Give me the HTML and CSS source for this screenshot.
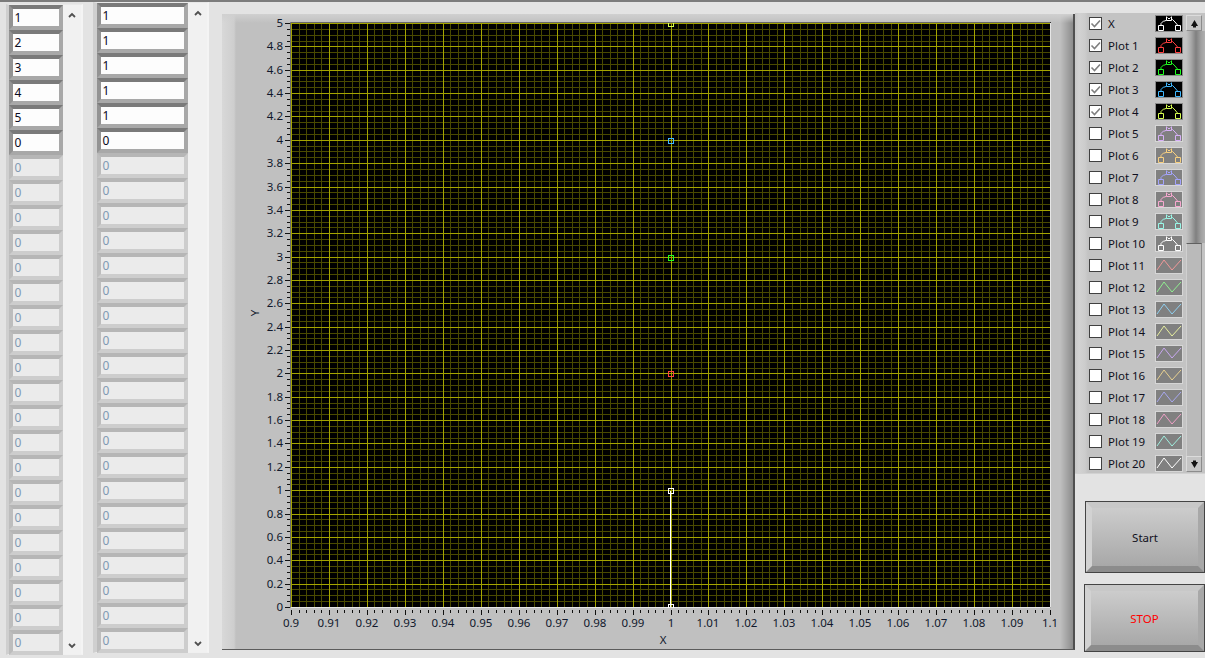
FILE: index.html
```html
<!DOCTYPE html>
<html lang="en">
<head>
<meta charset="utf-8">
<title>XY Graph</title>
<link rel="stylesheet" href="styles.css">
</head>
<body>
<svg class="defs" width="0" height="0" aria-hidden="true">
  <symbol id="bump" viewBox="0 0 28 17">
    <path d="M6 10V8.5L8.5 6H10L12 4.5M16 4.5H17.5L20 7L22.5 10" fill="none" stroke="currentColor"/>
    <path d="M11.5 1.5V5.5H16.5V1.5M12.5 2.5L14 4L15.5 2.5M3.5 10.5H8.5V15.5H3.5ZM20.5 10.5H25.5V15.5H20.5Z" fill="none" stroke="currentColor"/>
  </symbol>
  <symbol id="zig" viewBox="0 0 28 17">
    <path d="M2 13L9 3L17 13L26 3" fill="none" stroke="currentColor"/>
  </symbol>
  <symbol id="tick" viewBox="0 0 11 11">
    <path d="M1.5 5.5L4.5 8.5L10 2.5" fill="none" stroke="#808080" stroke-width="1.6"/>
  </symbol>
</svg>
<main class="app">
  <section class="list list-a">
    <div class="cells">
      <div class="cell">1</div><div class="cell">2</div><div class="cell">3</div><div class="cell">4</div><div class="cell">5</div><div class="cell">0</div>
      <div class="cell off">0</div><div class="cell off">0</div><div class="cell off">0</div><div class="cell off">0</div><div class="cell off">0</div>
      <div class="cell off">0</div><div class="cell off">0</div><div class="cell off">0</div><div class="cell off">0</div><div class="cell off">0</div>
      <div class="cell off">0</div><div class="cell off">0</div><div class="cell off">0</div><div class="cell off">0</div><div class="cell off">0</div>
      <div class="cell off">0</div><div class="cell off">0</div><div class="cell off">0</div><div class="cell off">0</div><div class="cell off">0</div>
    </div>
    <div class="vscroll">
      <svg class="chev" viewBox="0 0 8 6"><path d="M1 5L4 2L7 5" fill="none" stroke="#505050" stroke-width="1.8"/></svg>
      <svg class="chev" viewBox="0 0 8 6"><path d="M1 1L4 4L7 1" fill="none" stroke="#505050" stroke-width="1.8"/></svg>
    </div>
  </section>
  <section class="list list-b">
    <div class="cells">
      <div class="cell">1</div><div class="cell">1</div><div class="cell">1</div><div class="cell">1</div><div class="cell">1</div><div class="cell">0</div>
      <div class="cell off">0</div><div class="cell off">0</div><div class="cell off">0</div><div class="cell off">0</div><div class="cell off">0</div>
      <div class="cell off">0</div><div class="cell off">0</div><div class="cell off">0</div><div class="cell off">0</div><div class="cell off">0</div>
      <div class="cell off">0</div><div class="cell off">0</div><div class="cell off">0</div><div class="cell off">0</div><div class="cell off">0</div>
      <div class="cell off">0</div><div class="cell off">0</div><div class="cell off">0</div><div class="cell off">0</div><div class="cell off">0</div>
    </div>
    <div class="vscroll">
      <svg class="chev" viewBox="0 0 8 6"><path d="M1 5L4 2L7 5" fill="none" stroke="#505050" stroke-width="1.8"/></svg>
      <svg class="chev" viewBox="0 0 8 6"><path d="M1 1L4 4L7 1" fill="none" stroke="#505050" stroke-width="1.8"/></svg>
    </div>
  </section>
  <section class="graph">
    <svg id="chart" class="chart" width="851" height="635" viewBox="222 14 851 635"></svg>
  </section>
  <aside class="side">
    <div class="legend">
      <div class="rows">
        <div class="row"><span class="check"><svg class="mark"><use href="#tick"/></svg></span><span class="name">X</span><svg class="ico dark c0"><use href="#bump"/></svg></div>
        <div class="row"><span class="check"><svg class="mark"><use href="#tick"/></svg></span><span class="name">Plot 1</span><svg class="ico dark c1"><use href="#bump"/></svg></div>
        <div class="row"><span class="check"><svg class="mark"><use href="#tick"/></svg></span><span class="name">Plot 2</span><svg class="ico dark c2"><use href="#bump"/></svg></div>
        <div class="row"><span class="check"><svg class="mark"><use href="#tick"/></svg></span><span class="name">Plot 3</span><svg class="ico dark c3"><use href="#bump"/></svg></div>
        <div class="row"><span class="check"><svg class="mark"><use href="#tick"/></svg></span><span class="name">Plot 4</span><svg class="ico dark c4"><use href="#bump"/></svg></div>
        <div class="row"><span class="check"></span><span class="name">Plot 5</span><svg class="ico c5"><use href="#bump"/></svg></div>
        <div class="row"><span class="check"></span><span class="name">Plot 6</span><svg class="ico c6"><use href="#bump"/></svg></div>
        <div class="row"><span class="check"></span><span class="name">Plot 7</span><svg class="ico c7"><use href="#bump"/></svg></div>
        <div class="row"><span class="check"></span><span class="name">Plot 8</span><svg class="ico c8"><use href="#bump"/></svg></div>
        <div class="row"><span class="check"></span><span class="name">Plot 9</span><svg class="ico c9"><use href="#bump"/></svg></div>
        <div class="row"><span class="check"></span><span class="name">Plot 10</span><svg class="ico c0"><use href="#bump"/></svg></div>
        <div class="row"><span class="check"></span><span class="name">Plot 11</span><svg class="ico c11"><use href="#zig"/></svg></div>
        <div class="row"><span class="check"></span><span class="name">Plot 12</span><svg class="ico c12"><use href="#zig"/></svg></div>
        <div class="row"><span class="check"></span><span class="name">Plot 13</span><svg class="ico c13"><use href="#zig"/></svg></div>
        <div class="row"><span class="check"></span><span class="name">Plot 14</span><svg class="ico c14"><use href="#zig"/></svg></div>
        <div class="row"><span class="check"></span><span class="name">Plot 15</span><svg class="ico c15"><use href="#zig"/></svg></div>
        <div class="row"><span class="check"></span><span class="name">Plot 16</span><svg class="ico c16"><use href="#zig"/></svg></div>
        <div class="row"><span class="check"></span><span class="name">Plot 17</span><svg class="ico c17"><use href="#zig"/></svg></div>
        <div class="row"><span class="check"></span><span class="name">Plot 18</span><svg class="ico c18"><use href="#zig"/></svg></div>
        <div class="row"><span class="check"></span><span class="name">Plot 19</span><svg class="ico c19"><use href="#zig"/></svg></div>
        <div class="row"><span class="check"></span><span class="name">Plot 20</span><svg class="ico c0"><use href="#zig"/></svg></div>
      </div>
      <div class="bar">
        <div class="arrow"><svg class="tri" viewBox="0 0 9 9"><path d="M4.5 1L8 7H1Z" fill="#111"/><path d="M3 7H6V8.5H3Z" fill="#111"/></svg></div>
        <div class="track"></div>
        <div class="thumb"></div>
        <div class="arrow"><svg class="tri" viewBox="0 0 9 9"><path d="M4.5 8L8 2H1Z" fill="#111"/><path d="M3 2H6V0.5H3Z" fill="#111"/></svg></div>
      </div>
    </div>
    <button class="btn btn-start" type="button"><span class="face">Start</span></button>
    <button class="btn btn-stop" type="button"><span class="face">STOP</span></button>
  </aside>
</main>
<script src="script.js"></script>
</body>
</html>
```
FILE: styles.css
```css
* { box-sizing: border-box; }
html, body { margin: 0; padding: 0; }
body {
  width: 1205px;
  height: 658px;
  overflow: hidden;
  background: #e3e3e3;
  font-family: "Noto Sans", "Liberation Sans", sans-serif;
  font-size: 11.5px;
  color: #101020;
}
.defs { display: block; height: 0; }
.app {
  display: flex;
  align-items: flex-start;
  height: 658px;
  border-top: 2px solid #7c7c7c;
}

/* numeric arrays */
.list {
  display: flex;
  background: #dcdcdc;
  border-style: solid;
  border-color: #e9e9e9 #f4f4f4 #f0f0f0 #cfcfcf;
}
.list-a { width: 77px; height: 651px; margin: 2px 0 0 6px; border-width: 1px 2px 1px 3px; }
.list-a .cell { width: 54px; }
.list-a .vscroll { width: 18px; }
.list-b { width: 116px; height: 651px; margin: 0 0 0 10px; border-width: 1px 2px 1px 4px; }
.list-b .cell { width: 91px; }
.list-b .vscroll { width: 19px; }
.cells { display: flex; flex-direction: column; }
.cell {
  height: 25px;
  flex: none;
  padding-left: 1.5px;
  line-height: 17px;
  font-size: 12px;
  background: #fdfdfd;
  color: #0a0a20;
  border: 4px solid;
  border-color: #7a7a7a #a8a8a8 #a8a8a8 #939393;
}
.cell.off {
  background: #ebebeb;
  color: #8199b2;
  border-color: #b6b6b6 #cdcdcd #cdcdcd #bdbdbd;
}
.vscroll {
  display: flex;
  flex-direction: column;
  justify-content: space-between;
  align-items: center;
  background: #f1f1f1;
  padding: 7px 0 5px;
}
.chev { width: 8px; height: 6px; display: block; }

/* graph */
.graph {
  width: 853px;
  height: 636px;
  margin: 12px 0 0 13px;
  border-right: 2px solid #505050;
  border-bottom: 1px solid #5c5c5c;
  background:
    linear-gradient(180deg, #d0d0d0 0, rgba(192, 192, 192, 0) 9px),
    linear-gradient(90deg, #d8d8d8 0, #cecece 12px, #c0c0c0 14px, #c0c0c0 838px, #8c8c8c 851px);
}
.chart { display: block; }
.axis-label { font-family: "Noto Sans", "Liberation Sans", sans-serif; font-size: 11.5px; fill: #10182c; }
.axis-title { font-family: "Noto Sans", "Liberation Sans", sans-serif; font-size: 11.5px; fill: #10182c; }

/* side column */
.side {
  width: 130px;
  margin-top: 11px;
  display: flex;
  flex-direction: column;
  align-items: flex-start;
}
.legend {
  width: 130px;
  height: 461px;
  display: flex;
  overflow: hidden;
  border-bottom: 1px solid #d2d2d2;
  background: linear-gradient(90deg, #c8c8c8 0, #d2d2d2 4px, #cccccc 10px, #c3c3c3 13px);
}
.rows { width: 108px; flex: none; margin-top: -1px; }
.row {
  height: 22px;
  display: flex;
  align-items: center;
  padding-left: 14px;
}
.check {
  width: 13px;
  height: 13px;
  flex: none;
  background: #fff;
  border: 1px solid #404040;
}
.mark { display: block; width: 11px; height: 11px; }
.name { margin-left: 6px; white-space: nowrap; }
.ico {
  margin-left: auto;
  width: 28px;
  height: 17px;
  flex: none;
  display: block;
  background: #808080;
  outline: 1px solid #d6d6d6;
  outline-offset: -1px;
}
.ico.dark { background: #000; outline-color: #8a8a8a; }
.c0 { color: #fff; }
.c1 { color: #ff4040; }
.c2 { color: #20ff20; }
.c3 { color: #40b8ff; }
.c4 { color: #d8ff50; }
.c5 { color: #d8b0f8; }
.c6 { color: #f8d080; }
.c7 { color: #a4a4ff; }
.c8 { color: #f8a8d0; }
.c9 { color: #98f8e8; }
.c11 { color: #f09898; }
.c12 { color: #90f090; }
.c13 { color: #90d0f0; }
.c14 { color: #e8f0a0; }
.c15 { color: #c8a8f0; }
.c16 { color: #e8d090; }
.c17 { color: #a8a8f0; }
.c18 { color: #f0a0c8; }
.c19 { color: #a0f0e0; }
.bar {
  width: 19px;
  margin: 2px 0 0 3px;
  height: 457px;
  display: flex;
  flex-direction: column;
}
.arrow {
  width: 16px;
  height: 16px;
  flex: none;
  display: flex;
  align-items: center;
  justify-content: center;
  background: #c4c4c4;
  border: 1px solid;
  border-color: #dcdcdc #8c8c8c #8c8c8c #dcdcdc;
}
.tri { width: 9px; height: 9px; display: block; }
.track {
  height: 212px;
  flex: none;
  background: linear-gradient(90deg, #c4c4c4 0, #a8a8a8 5px, #808080 10px, #a0a0a0 15px, #b0b0b0 19px);
}
.thumb {
  width: 16px;
  height: 213px;
  flex: none;
  background: #bababa;
  border-top: 1px solid #606060;
  border-left: 1px solid #d0d0d0;
  border-right: 1px solid #8c8c8c;
}

/* buttons */
.btn {
  display: block;
  padding: 0;
  border: 1px solid #444;
  background: #bbb;
  font: inherit;
}
.btn-start { width: 120px; height: 72px; margin: 27px 0 0 10px; color: #101020; }
.btn-stop { width: 121px; height: 68px; margin: 11px 0 0 9px; color: #ff0000; }
.face {
  display: flex;
  align-items: center;
  justify-content: center;
  width: 100%;
  height: 100%;
  border: 6px solid;
  border-color: #c8c8c8 #a8a8a8 #8c8c8c #d2d2d2;
  background: linear-gradient(180deg, #cccccc, #a8a8a8);
}
```
FILE: script.js
```js
(function () {
  var NS = "http://www.w3.org/2000/svg";
  var svg = document.getElementById("chart");
  var L = 291, R = 1050, T = 23, B = 607;
  var XW = R - L, YH = B - T;

  function el(name, attrs, parent, text) {
    var n = document.createElementNS(NS, name);
    for (var k in attrs) n.setAttribute(k, attrs[k]);
    if (text !== undefined) n.textContent = text;
    (parent || svg).appendChild(n);
    return n;
  }
  function xAt(i) { return Math.round(L + XW * i / 100); }
  function yAt(i) { return Math.round(T + YH * i / 100); }

  el("rect", { x: L, y: T - 1, width: XW + 1, height: YH + 2, fill: "#000" });

  var minor = "", major = "", ticks = "", i;
  for (i = 0; i <= 100; i++) {
    var x = xAt(i), isMajX = i % 5 === 0;
    var y = yAt(i), isMajY = i % 4 === 0;
    var vx = "M" + (x + 0.5) + " " + T + "V" + B;
    var hy = "M" + L + " " + (y + 0.5) + "H" + R;
    if (isMajX) major += vx; else minor += vx;
    if (isMajY) major += hy; else minor += hy;
    ticks += "M" + (x + 0.5) + " 610V" + (isMajX ? 615 : 613);
    ticks += "M" + (isMajY ? 285 : 287) + " " + (y + 0.5) + "H290";
  }
  el("path", { d: minor, stroke: "#4a4a00", fill: "none" });
  el("path", { d: major, stroke: "#a4a400", fill: "none" });
  el("path", { d: ticks, stroke: "#101010", fill: "none" });
  el("path", { d: "M" + (L - 0.5) + " " + (T - 0.5) + "H" + (R + 0.5), stroke: "#6a6a6a", fill: "none" });
  el("path", { d: "M" + (L - 0.5) + " " + (T - 0.5) + "V" + (B + 0.5), stroke: "#6a6a6a", fill: "none" });
  el("path", { d: "M" + (R + 0.5) + " " + T + "V" + (B + 0.5) + "H" + L, stroke: "#e6e6e6", fill: "none" });

  for (i = 0; i <= 20; i++) {
    var xv = (90 + i) / 100;
    el("text", { "class": "axis-label", x: xAt(i * 5), y: 627, "text-anchor": "middle" }, null, String(xv));
  }
  for (i = 0; i <= 25; i++) {
    var yv = Math.round((5 - i * 0.2) * 10) / 10;
    el("text", { "class": "axis-label", x: 283, y: yAt(i * 4) + 4, "text-anchor": "end" }, null, String(yv));
  }
  el("text", { "class": "axis-title", x: 663, y: 644, "text-anchor": "middle" }, null, "X");
  el("text", { "class": "axis-title", x: 0, y: 0, "text-anchor": "middle", transform: "translate(259 313) rotate(-90)" }, null, "Y");

  var plot = el("svg", { x: L, y: T, width: XW, height: YH + 1, viewBox: L + " " + T + " " + XW + " " + (YH + 1) });
  el("path", { d: "M670.5 491V607", stroke: "#fff", fill: "none" }, plot);
  var pts = [[607, "#ffffff"], [491, "#ffffff"], [374, "#ff4040"], [258, "#20ff20"], [141, "#40b8ff"], [24, "#d8ff50"]];
  pts.forEach(function (p) {
    el("rect", { x: 668.5, y: p[0] - 2.5, width: 5, height: 5, fill: "none", stroke: p[1] }, plot);
  });
})();
```
